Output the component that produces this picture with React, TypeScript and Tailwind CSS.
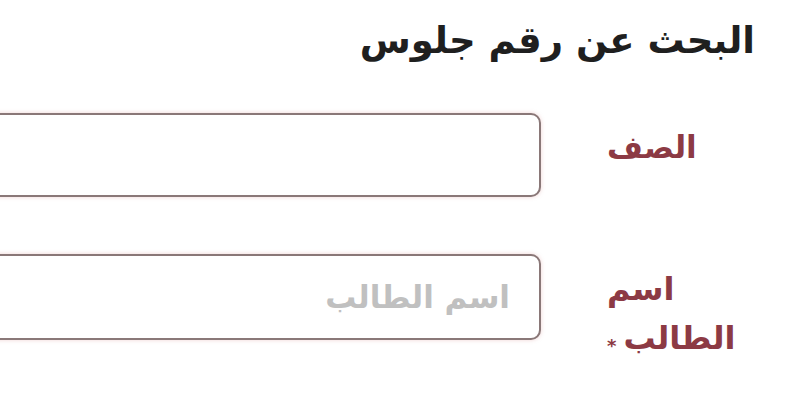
import React from 'react';

const fontStack = { fontFamily: '"DejaVu Sans", "Noto Sans", sans-serif' };

export default function App() {
  return (
    <div dir="rtl" className="w-[800px] h-[400px] bg-white overflow-hidden pr-[45px]" style={fontStack}>
      <h1 className="pt-[16px] text-[37px] leading-[50px] font-bold text-[#1f1f1f]">البحث عن رقم جلوس</h1>

      <div className="mt-[47px] flex flex-col gap-[57px]">
        <div className="flex items-start gap-[66px]">
          <label className="w-[148px] shrink-0 pt-[10px] text-left text-[31px] leading-[48px] font-bold text-[#8c3a44]">
            الصف
          </label>
          <div className="flex-1 -ml-6 h-[84px] rounded-[10px] border-2 border-[#8a7878] bg-white shadow-[0_0_4px_rgba(210,130,130,0.35)]" />
        </div>

        <div className="flex items-start gap-[66px]">
          <label className="w-[148px] shrink-0 pt-[11px] text-left text-[32px] leading-[49px] font-bold text-[#8c3a44]">
            اسم الطالب<span className="mr-[7px] text-[18px] align-[-3px]">*</span>
          </label>
          <div className="flex-1 -ml-6 h-[86px] rounded-[10px] border-2 border-[#8a7878] bg-white shadow-[0_0_4px_rgba(210,130,130,0.35)] flex items-center pr-[29px]">
            <input
              className="w-full bg-transparent outline-none text-[31px] font-bold text-[#333] placeholder:text-[#c0c0c0]"
              placeholder="اسم الطالب"
              style={fontStack}
            />
          </div>
        </div>
      </div>
    </div>
  );
}
